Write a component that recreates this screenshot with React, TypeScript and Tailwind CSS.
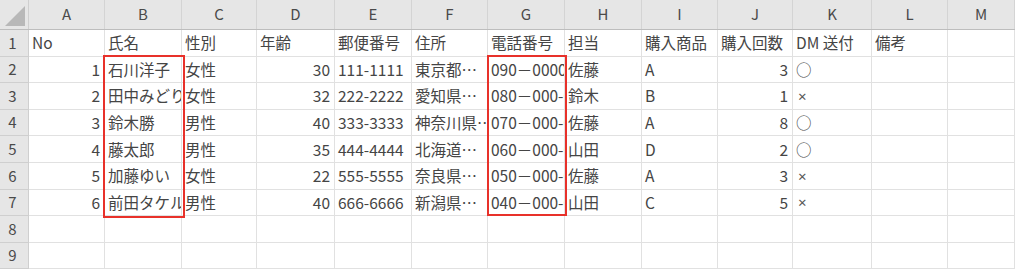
import React from 'react'

// widths of row header + columns A..M (px)
const colWidths = [29, 76, 77, 75, 78, 77, 76, 77, 77, 76, 75, 79, 76, 67]
const letters = ['A', 'B', 'C', 'D', 'E', 'F', 'G', 'H', 'I', 'J', 'K', 'L', 'M']

type Cell = { v: string; num?: boolean }

const header: Cell[] = [
  { v: 'No' }, { v: '氏名' }, { v: '性別' }, { v: '年齢' }, { v: '郵便番号' }, { v: '住所' },
  { v: '電話番号' }, { v: '担当' }, { v: '購入商品' }, { v: '購入回数' }, { v: 'DM 送付' }, { v: '備考' }, { v: '' },
]

const rows: (string | number)[][] = [
  [1, '石川洋子', '女性', 30, '111-1111', '東京都…', '090－0000－0000', '佐藤', 'A', 3, '○', '', ''],
  [2, '田中みどり', '女性', 32, '222-2222', '愛知県…', '080－000-0000', '鈴木', 'B', 1, '×', '', ''],
  [3, '鈴木勝', '男性', 40, '333-3333', '神奈川県…', '070－000-0000', '佐藤', 'A', 8, '○', '', ''],
  [4, '藤太郎', '男性', 35, '444-4444', '北海道…', '060－000-0000', '山田', 'D', 2, '○', '', ''],
  [5, '加藤ゆい', '女性', 22, '555-5555', '奈良県…', '050－000-0000', '佐藤', 'A', 3, '×', '', ''],
  [6, '前田タケル', '男性', 40, '666-6666', '新潟県…', '040－000-0000', '山田', 'C', 5, '×', '', ''],
  ['', '', '', '', '', '', '', '', '', '', '', '', ''],
  ['', '', '', '', '', '', '', '', '', '', '', '', ''],
]

const font = { fontFamily: '"Noto Sans CJK JP", "Noto Sans", sans-serif' }

const App = () => {
  const allRows: Cell[][] = [
    header,
    ...rows.map((r) => r.map((v) => ({ v: String(v), num: typeof v === 'number' }))),
  ]
  return (
    <div className="w-[1024px] h-[274px] overflow-hidden bg-white" style={font}>
      <div className="relative w-[1015px]">
        {/* column letters */}
        <div className="flex h-[30px] bg-[#e6e6e6] border-b border-[#bdbdbd]">
          <div className="relative shrink-0 border-r border-[#cfcfcf]" style={{ width: colWidths[0] }}>
            <div className="absolute right-[3px] bottom-[3px] w-0 h-0 border-l-[20px] border-l-transparent border-b-[20px] border-b-[#b8b8b8]" />
          </div>
          {letters.map((l, i) => (
            <div
              key={l}
              className="shrink-0 flex items-center justify-center border-r border-[#d4d4d4] text-[15px] text-[#4a4a4a]"
              style={{ width: colWidths[i + 1] }}
            >
              {l}
            </div>
          ))}
        </div>

        {/* rows */}
        {allRows.map((r, ri) => (
          <div key={ri} className="flex h-[26.6px]">
            <div
              className="shrink-0 flex items-center justify-center pr-[3px] bg-[#e6e6e6] border-r border-b border-[#cfcfcf] text-[15px] text-[#4a4a4a]"
              style={{ width: colWidths[0] }}
            >
              {ri + 1}
            </div>
            {r.map((c, ci) => (
              <div
                key={ci}
                className={`shrink-0 flex items-center overflow-hidden whitespace-nowrap border-r border-b border-[#e1e1e1] text-[15.5px] text-[#454545] ${
                  c.num ? 'justify-end pr-[4px]' : 'justify-start pl-[3px]'
                }`}
                style={{ width: colWidths[ci + 1] }}
              >
                {c.v === '×' ? (
                  <span className="pl-[2px] text-[15px] text-[#555]" style={{ fontFamily: '"Noto Sans", sans-serif' }}>×</span>
                ) : (
                  c.v
                )}
              </div>
            ))}
          </div>
        ))}

        {/* red highlight boxes */}
        <div className="absolute left-[103px] top-[55px] w-[82px] h-[163px] border-2 border-[#e8312a]" />
        <div className="absolute left-[487px] top-[55px] w-[80px] h-[161px] border-2 border-[#e8312a]" />
      </div>
    </div>
  )
}

export default App
